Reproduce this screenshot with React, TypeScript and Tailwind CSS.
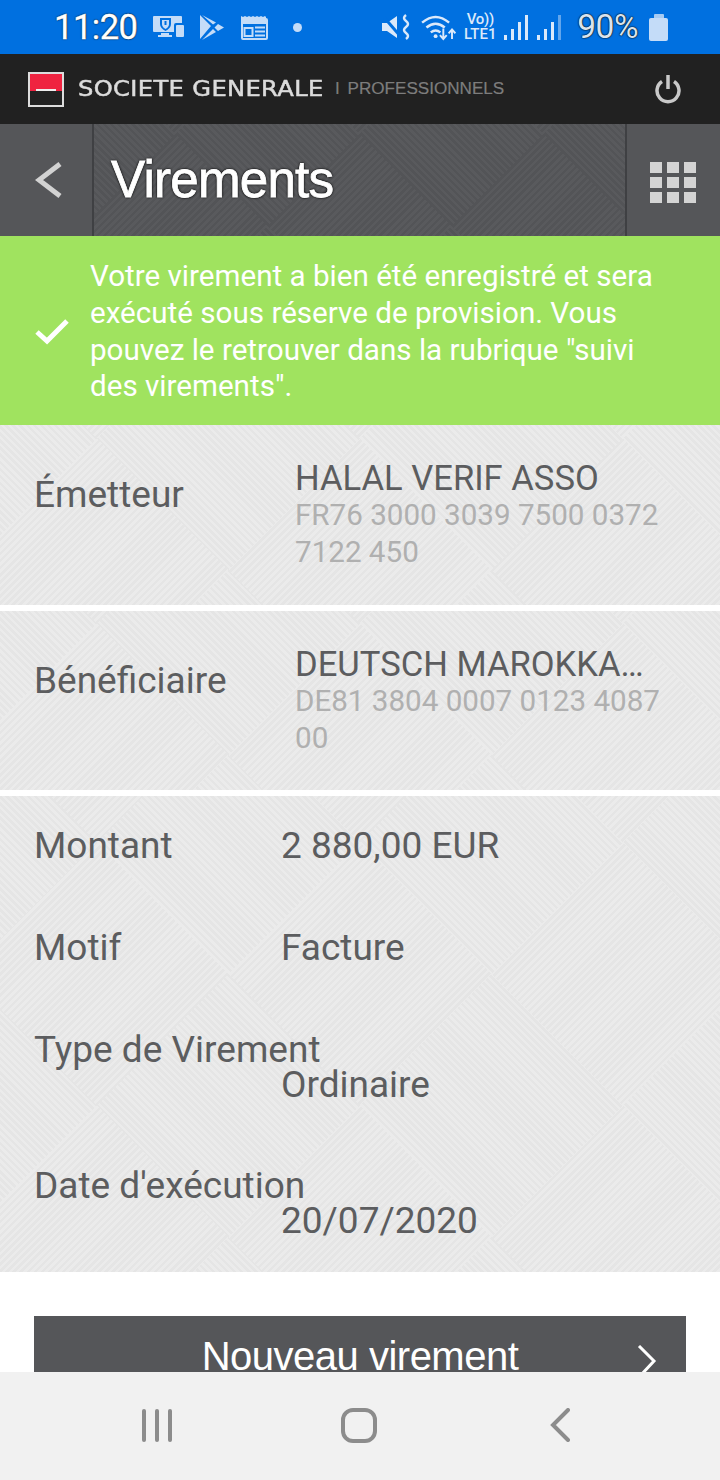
// light section texture: stripes in one direction, the other direction masked into big diamonds
const lightPattern =
  "relative bg-[repeating-linear-gradient(135deg,#e5e5e5_0,#e5e5e5_2.500px,#ebebeb_2.500px,#ebebeb_5px)] before:absolute before:inset-0 before:bg-[repeating-linear-gradient(45deg,#e5e5e5_0,#e5e5e5_2.500px,#ebebeb_2.500px,#ebebeb_5px)] before:[mask-image:repeating-linear-gradient(45deg,#000_0,#000_186px,transparent_186px,transparent_372px),repeating-linear-gradient(-45deg,#000_0,#000_186px,transparent_186px,transparent_372px)] before:[mask-composite:exclude]";

const darkPattern =
  "relative bg-[repeating-linear-gradient(135deg,#535457_0,#535457_2.500px,#595a5d_2.500px,#595a5d_5px)] before:absolute before:inset-0 before:bg-[repeating-linear-gradient(45deg,#535457_0,#535457_2.500px,#595a5d_2.500px,#595a5d_5px)] before:[mask-image:repeating-linear-gradient(45deg,#000_0,#000_130px,transparent_130px,transparent_260px),repeating-linear-gradient(-45deg,#000_0,#000_130px,transparent_130px,transparent_260px)] before:[mask-composite:exclude]";

function AppIcons() {
  return (
    <div className="ml-[16px] flex items-center text-[#c4dcf8]">
      <svg width="31" height="22" viewBox="0 0 31 22" fill="currentColor">
        <path d="M1 0h27a1 1 0 0 1 1 1v6h-6a2 2 0 0 0-2 2v7H1a1 1 0 0 1-1-1V1a1 1 0 0 1 1-1z" />
        <path d="M8 17h8v2h3v2H5v-2h3zM24 9h6a1 1 0 0 1 1 1v10a1 1 0 0 1-1 1h-6a1 1 0 0 1-1-1V10a1 1 0 0 1 1-1z" />
        <path d="M7 2h11v6q0 4-5.500 7Q7 12 7 8z" fill="#0070e0" />
        <path d="M9 4h7v4q0 3-3.500 5Q9 11 9 8z" />
        <path d="M11.500 5h2v4h-2z" fill="#0070e0" />
      </svg>
      <svg className="ml-[16px]" width="24" height="25" viewBox="0 0 24 25" fill="currentColor">
        <path d="M0 0l11 11-11 13zM2 0l11 9.500 3-2zM18 9l6 3.500-6 3.500-3.500-3.500zM2 25l11-11 3 3z" />
      </svg>
      <svg className="ml-[17px]" width="27" height="25" viewBox="0 0 27 25" fill="none" stroke="currentColor" strokeWidth="2">
        <path d="M0 9V1l2 1 2-1 2 1 2-1 2 1 2-1 2 1 2-1 2 1 2-1 2 1 2-1 1 1v7z" fill="currentColor" stroke="none" />
        <rect x="1" y="4" width="25" height="20" rx="1" />
        <rect x="3.500" y="13" width="8" height="8" />
        <path d="M14 12.500h10M14 16.500h10M14 20.500h10" />
      </svg>
      <div className="ml-[25px] h-[9px] w-[9px] rounded-full bg-[#c4dcf8]" />
    </div>
  );
}

function StatusIcons() {
  return (
    <div className="ml-auto flex items-center text-[#dbe9fa]">
      <svg width="28" height="26" viewBox="0 0 28 26" fill="currentColor">
        <path d="M0 9h5l10-7v22l-10-7H0z" />
        <path d="M0 1l19 22" stroke="#0070e0" strokeWidth="3" />
        <path d="M24 1q-4 3 0 6t0 6 0 6 0 6" fill="none" stroke="currentColor" strokeWidth="2.500" />
      </svg>
      <svg className="ml-[11px]" width="35" height="27" viewBox="0 0 36 28" fill="none" stroke="currentColor">
        <path d="M1 9q14-12 28 0M5.500 14q9.500-8 19 0M10 19q5-4 10 0" strokeWidth="2.500" />
        <circle cx="15" cy="23" r="2" fill="currentColor" stroke="none" />
        <path d="M23 15v11M19.500 22l3.500 4 3.500-4M32 26V16M28.500 20l3.500-4 3.500 4" strokeWidth="2" />
      </svg>
      <div className="ml-[7px] flex w-[34px] flex-col items-center text-[15px] font-medium leading-[15px]">
        <span className="tracking-[-0.3px]">Vo))</span>
        <span>LTE1</span>
      </div>
      <svg className="ml-[7px]" width="24" height="26" viewBox="0 0 24 26" fill="currentColor">
        <path d="M0 21h3v5H0zM7 15h3v11H7zM14 8h3v18h-3zM21 1h3v25h-3z" />
      </svg>
      <svg className="ml-[9px]" width="24" height="26" viewBox="0 0 24 26" fill="currentColor">
        <path d="M0 21h3v5H0zM7 15h3v11H7zM14 8h3v18h-3z" />
        <path d="M21 1h3v25h-3z" opacity="0.45" />
      </svg>
      <span className="ml-[16px] text-[33.500px] leading-none tracking-[-0.5px] text-[#d9e3ee] [text-shadow:0_0_1px_#000,0_0_2px_#000]">
        90%
      </span>
      <div className="ml-[11px] flex flex-col items-center">
        <div className="h-[4px] w-[10px] rounded-t-[1px] bg-[#a6cbf3]" />
        <div className="h-[23px] w-[19px] rounded-[2px] bg-[#c4dcf8]" />
      </div>
    </div>
  );
}

function StatusBar() {
  return (
    <div className="flex h-[54px] shrink-0 items-center bg-[#0070e0] pl-[54px] pr-[52px] font-['Roboto',sans-serif]">
      <span className="text-[34.500px] leading-none tracking-[-0.5px] text-white [-webkit-text-stroke:0.4px_white] [text-shadow:0_0_1px_#000,0_0_2px_#000]">
        11:20
      </span>
      <AppIcons />
      <StatusIcons />
    </div>
  );
}

function BrandBar() {
  return (
    <div className="flex h-[70px] shrink-0 items-center bg-[#212121] pl-[28px] pr-[39px]">
      <div className="flex h-[35px] w-[36px] flex-col border-2 border-[#dddddd]">
        <div className="relative h-[17px] bg-[#ef2340]">
          <div className="absolute bottom-0 left-[6px] h-[2px] w-[20px] bg-[#eeeeee]" />
        </div>
        <div className="flex-1 bg-[#222222]" />
      </div>
      <span className="ml-[14px] inline-block w-[247px] origin-left scale-x-[1.18] whitespace-nowrap font-['DejaVu_Sans',sans-serif] text-[20.500px] leading-none tracking-[0.3px] text-[#dcdcdc] [-webkit-text-stroke:0.5px_#dcdcdc]">
        SOCIETE GENERALE
      </span>
      <span className="ml-[10px] font-['Liberation_Sans',sans-serif] text-[17.100px] leading-none text-[#7d7d7d] [-webkit-text-stroke:0.2px_#7d7d7d] [word-spacing:3px]">
        I PROFESSIONNELS
      </span>
      <svg className="ml-auto text-[#c9c9c9]" width="26" height="30" viewBox="0 0 26 30" fill="none" stroke="currentColor" strokeWidth="3.500">
        <path d="M13 1v14" />
        <path d="M7 7.500a11 11 0 1 0 12 0" />
      </svg>
    </div>
  );
}

function TitleBar() {
  return (
    <div className="flex h-[112px] shrink-0 bg-[#555659]">
      <div className="flex w-[92px] items-center pl-[35px]">
        <svg width="28" height="36" viewBox="0 0 28 36" fill="none" stroke="#d2d2d2" strokeWidth="5">
          <path d="M25 2L4 18l21 16" />
        </svg>
      </div>
      <div className={`flex flex-1 items-center border-x-2 border-x-[#3f4043] pl-[17px] ${darkPattern}`}>
        <h1 className="relative font-['Liberation_Sans',sans-serif] text-[51.200px] leading-none tracking-[-0.8px] text-white [-webkit-text-stroke:0.8px_white] [text-shadow:0_0_1px_#000,0_0_2px_#000,0_0_3px_#000]">
          Virements
        </h1>
      </div>
      <div className="flex w-[93px] items-center justify-center pr-[2px] pt-[4px]">
        <div className="grid grid-cols-3 gap-x-[5px] gap-y-[4px]">
          {Array.from({ length: 9 }).map((_, i) => (
            <div key={i} className="h-[11px] w-[12px] bg-[#d4d4d4]" />
          ))}
        </div>
      </div>
    </div>
  );
}

function SuccessBanner() {
  return (
    <div className="flex h-[189px] shrink-0 items-center bg-[#a0e35f] pl-[35px] pt-[2px] font-['Roboto',sans-serif]">
      <svg width="34" height="27" viewBox="0 0 34 27" fill="none" stroke="white" strokeWidth="5" className="shrink-0">
        <path d="M2 14l10 9L32 3" />
      </svg>
      <p className="ml-[21px] w-[575px] text-[29.600px] leading-[36.700px] text-white">
        Votre virement a bien été enregistré et sera exécuté sous réserve de provision. Vous pouvez le retrouver dans la rubrique "suivi des virements".
      </p>
    </div>
  );
}

function PartyRow({ label, name, iban, height }: { label: string; name: string; iban: string; height: string }) {
  return (
    <div className={`flex shrink-0 pl-[34px] pr-[50px] pt-[35px] ${height} ${lightPattern}`}>
      <div className="relative w-[261px] pt-[15px] text-[37px] leading-[40px] text-[#5c5d5f]">{label}</div>
      <div className="relative min-w-0 flex-1">
        <div className="whitespace-nowrap text-[34.600px] leading-[37px] text-[#5c5d5f]">{name}</div>
        <div className="text-[29.600px] leading-[36.500px] text-[#b0b0b0]">{iban}</div>
      </div>
    </div>
  );
}

function DetailRow({ label, value, stacked }: { label: string; value: string; stacked?: boolean }) {
  if (stacked) {
    return (
      <div className="h-[136px]">
        <div className="leading-[35px]">{label}</div>
        <div className="pl-[247px] leading-[36px]">{value}</div>
      </div>
    );
  }
  return (
    <div className="flex h-[102px]">
      <div className="w-[247px] leading-[35px]">{label}</div>
      <div className="leading-[35px]">{value}</div>
    </div>
  );
}

function Details() {
  return (
    <div className={`h-[476px] shrink-0 pl-[34px] pt-[32px] text-[37px] text-[#5c5d5f] ${lightPattern}`}>
      <div className="relative">
        <DetailRow label="Montant" value="2 880,00 EUR" />
        <DetailRow label="Motif" value="Facture" />
        <DetailRow label="Type de Virement" value="Ordinaire" stacked />
        <DetailRow label="Date d'exécution" value="20/07/2020" stacked />
      </div>
    </div>
  );
}

function NavBar() {
  return (
    <div className="flex h-[108px] shrink-0 items-center bg-[#f1f1f1] pb-[2px] pl-[142px] pr-[150px]">
      <div className="flex gap-[9px]">
        <div className="h-[33px] w-[4px] rounded-full bg-[#8c8c8c]" />
        <div className="h-[33px] w-[4px] rounded-full bg-[#8c8c8c]" />
        <div className="h-[33px] w-[4px] rounded-full bg-[#8c8c8c]" />
      </div>
      <div className="ml-[169px] h-[35px] w-[36px] rounded-[12px] border-4 border-[#8c8c8c]" />
      <svg className="ml-auto" width="20" height="34" viewBox="0 0 20 34" fill="none" stroke="#8c8c8c" strokeWidth="4" strokeLinecap="round">
        <path d="M18 2L3 17l15 15" />
      </svg>
    </div>
  );
}

export default function App() {
  return (
    <div className="flex h-[1480px] w-[720px] flex-col overflow-hidden bg-white font-['Roboto',sans-serif]">
      <StatusBar />
      <BrandBar />
      <TitleBar />
      <div className="flex min-h-0 flex-1 flex-col overflow-hidden">
        <SuccessBanner />
        <PartyRow label="Émetteur" name="HALAL VERIF ASSO" iban="FR76 3000 3039 7500 0372 7122 450" height="h-[180px]" />
        <div className="h-[6px] shrink-0 bg-white" />
        <PartyRow label="Bénéficiaire" name="DEUTSCH MAROKKA…" iban="DE81 3804 0007 0123 4087 00" height="h-[179px]" />
        <div className="h-[6px] shrink-0 bg-white" />
        <Details />
        <div className="shrink-0 px-[34px] pt-[44px]">
          <div className="relative flex h-[56px] justify-center bg-[#555659] pt-[18px] text-[40px] leading-[44px] text-white">
            <span className="font-['Liberation_Sans',sans-serif] tracking-[-0.5px]">Nouveau virement</span>
            <svg className="absolute right-[29px] top-[29px]" width="20" height="27" viewBox="0 0 20 27" fill="none" stroke="white" strokeWidth="3">
              <path d="M2 1l15 15L4 30" />
            </svg>
          </div>
        </div>
      </div>
      <NavBar />
    </div>
  );
}
